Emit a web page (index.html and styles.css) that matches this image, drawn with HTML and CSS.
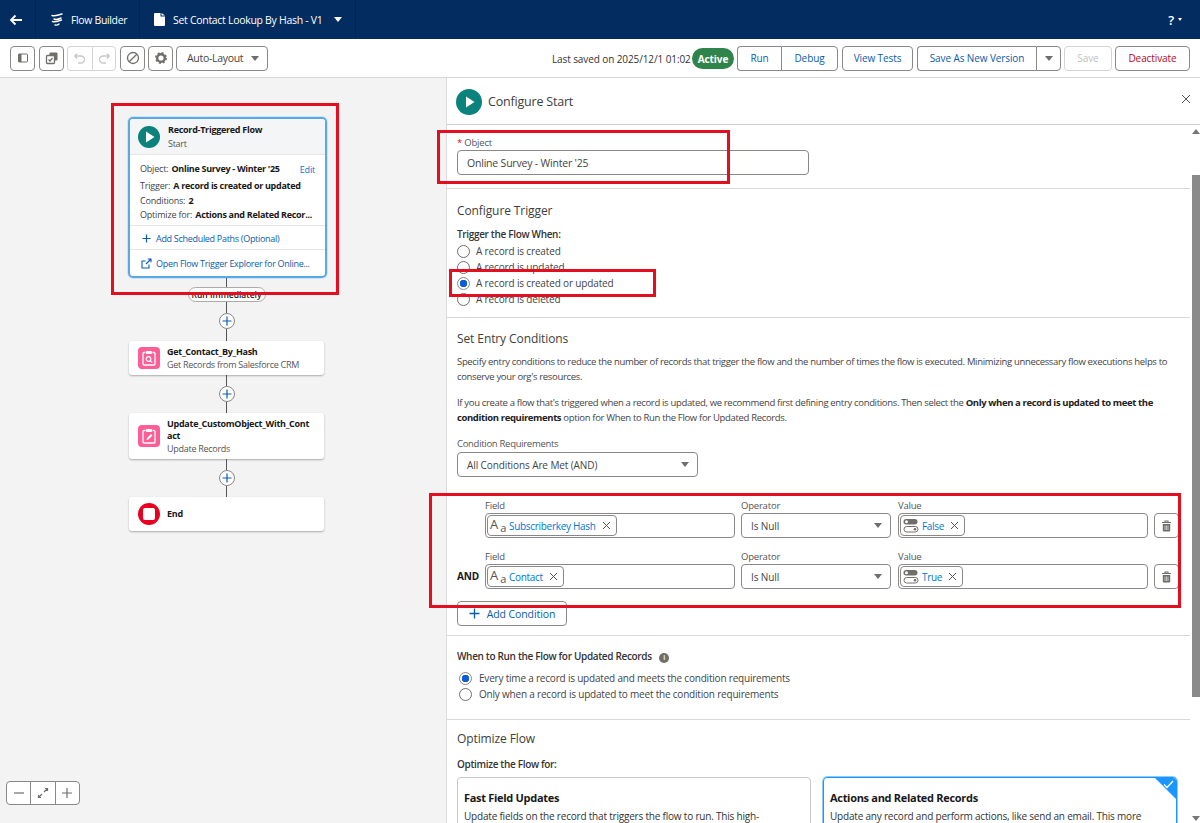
FILE: index.html
```html
<!DOCTYPE html>
<html lang="en">
<head>
<meta charset="utf-8">
<title>Flow Builder</title>
<link rel="stylesheet" href="styles.css">
</head>
<body>
<header class="topbar">
  <div class="tab tab-back">
    <svg class="ic" width="16" height="16" viewBox="0 0 16 16"><path d="M14 8H3M7.500 3.500 3 8l4.500 4.500" fill="none" stroke="#fff" stroke-width="1.800"/></svg>
  </div>
  <div class="tab tab-app">
    <svg width="14" height="16" viewBox="0 0 14 16"><path d="M2 3.500c3 1 6-.5 10-1.500M4 7c2 1 4 .5 7-1M2.500 9.500c3 1 6-.5 9-1.500M5 13c2 .5 3 0 4-1" fill="none" stroke="#fff" stroke-width="1.400" stroke-linecap="round"/></svg>
    <span>Flow Builder</span>
  </div>
  <div class="tab tab-title">
    <svg width="11" height="13" viewBox="0 0 11 13"><path d="M0 1a1 1 0 0 1 1-1h5.500v3.500H11V12a1 1 0 0 1-1 1H1a1 1 0 0 1-1-1zM7.500 0 11 2.600H7.500z" fill="#fff"/></svg>
    <span>Set Contact Lookup By Hash - V1</span>
    <i class="caret caret-white"></i>
  </div>
  <div class="help"><b>?</b><i class="caret-mini"></i></div>
</header>

<div class="toolbar">
  <button class="btn icon-btn btn-first"><svg width="12" height="12" viewBox="0 0 12 12"><rect x="1.500" y="2" width="9" height="8" rx="1" fill="none" stroke="#706e6b"/><rect x="1.500" y="2" width="3" height="8" fill="#706e6b"/></svg></button>
  <button class="btn icon-btn"><svg width="14" height="14" viewBox="0 0 14 14"><rect x="4.500" y="1.500" width="8" height="8" rx="1" fill="#706e6b"/><rect x="1.500" y="4.500" width="8" height="8" rx="1" fill="#fff" stroke="#706e6b" stroke-width="1.300"/><path d="m3.500 8.500 1.500 1.500 2.500-3" fill="none" stroke="#706e6b" stroke-width="1.200"/></svg></button>
  <div class="btn-group group-undo">
    <button class="btn icon-btn off"><svg width="14" height="14" viewBox="0 0 14 14"><path d="M4 7.500 1.800 5 4 2.800M2 5h6a3.500 3.500 0 0 1 0 7H5" fill="none" stroke="#c9c7c5" stroke-width="1.300"/></svg></button>
    <button class="btn icon-btn off"><svg width="14" height="14" viewBox="0 0 14 14"><path d="M10 7.500 12.200 5 10 2.800M12 5H6a3.500 3.500 0 0 0 0 7h3" fill="none" stroke="#c9c7c5" stroke-width="1.300"/></svg></button>
  </div>
  <button class="btn icon-btn"><svg width="14" height="14" viewBox="0 0 14 14"><circle cx="7" cy="7" r="5.500" fill="none" stroke="#706e6b" stroke-width="1.300"/><path d="M3.200 10.800 10.800 3.200" stroke="#706e6b" stroke-width="1.300"/></svg></button>
  <button class="btn icon-btn"><svg width="14" height="14" viewBox="0 0 14 14"><circle cx="7" cy="7" r="3.800" fill="none" stroke="#706e6b" stroke-width="2.400"/><circle cx="7" cy="7" r="5.200" fill="none" stroke="#706e6b" stroke-width="1.500" stroke-dasharray="2 2.080"/></svg></button>
  <div class="btn select-btn"><span>Auto-Layout</span><i class="caret caret-gray"></i></div>

  <div class="toolbar-right">
    <span class="saved">Last saved on 2025/12/1 01:02</span>
    <span class="badge">Active</span>
    <div class="btn-group group-run">
      <button class="btn link w-run">Run</button>
      <button class="btn link w-debug">Debug</button>
    </div>
    <button class="btn link w-tests">View Tests</button>
    <div class="btn-group group-save">
      <button class="btn link w-savenew">Save As New Version</button>
      <button class="btn w-more"><i class="caret caret-gray"></i></button>
    </div>
    <button class="btn off-text w-save">Save</button>
    <button class="btn danger w-deact">Deactivate</button>
  </div>
</div>

<main class="workspace">
  <section class="canvas">
    <div class="flow">
      <div class="start-card">
        <div class="start-head">
          <span class="play"><svg width="10" height="12" viewBox="0 0 10 12"><path d="M1 .5 9.500 6 1 11.500z" fill="#fff"/></svg></span>
          <div>
            <div class="node-title">Record-Triggered Flow</div>
            <div class="node-sub node-sub-start">Start</div>
          </div>
        </div>
        <div class="start-info">
          <div class="info-row info-first"><span>Object:</span> <b>Online Survey - Winter '25</b><a class="edit">Edit</a></div>
          <div class="info-row info-trigger"><span>Trigger:</span> <b>A record is created or updated</b></div>
          <div class="info-row info-cond"><span>Conditions:</span> <b>2</b></div>
          <div class="info-row info-opt"><span>Optimize for:</span> <b>Actions and Related Recor...</b></div>
        </div>
        <div class="start-link">
          <svg width="11" height="11" viewBox="0 0 11 11"><path d="M5.500 1.500v8M1.500 5.500h8" stroke="#0b5cab" stroke-width="1.200"/></svg>
          <span>Add Scheduled Paths (Optional)</span>
        </div>
        <div class="start-link start-link-last">
          <svg width="11" height="11" viewBox="0 0 11 11"><path d="M8 6.500V10H1V3h3.500M5 6l5-5M6.800 1H10v3.200" fill="none" stroke="#0b5cab" stroke-width="1.100"/></svg>
          <span>Open Flow Trigger Explorer for Online...</span>
        </div>
      </div>
      <div class="line h9"></div>
      <div class="pill">Run Immediately</div>
      <div class="line h11"></div>
      <div class="plus"><svg width="10" height="10" viewBox="0 0 10 10"><path d="M5 .5v9M.5 5h9" stroke="#0b5cab" stroke-width="1.200"/></svg></div>
      <div class="line h12"></div>

      <div class="node node-get">
        <span class="pink"><svg width="14" height="16" viewBox="0 0 14 16"><path d="M3.500 2.500H2a1 1 0 0 0-1 1V14a1 1 0 0 0 1 1h10a1 1 0 0 0 1-1V3.500a1 1 0 0 0-1-1h-1.500" fill="none" stroke="#fff" stroke-width="1.300"/><rect x="4" y="1" width="6" height="3" rx=".8" fill="#fff"/><circle cx="6.500" cy="9" r="2.300" fill="none" stroke="#fff" stroke-width="1.200"/><path d="m8.200 10.700 2 2" stroke="#fff" stroke-width="1.200"/></svg></span>
        <div>
          <div class="node-title">Get_Contact_By_Hash</div>
          <div class="node-sub">Get Records from Salesforce CRM</div>
        </div>
      </div>
      <div class="line h11"></div>
      <div class="plus"><svg width="10" height="10" viewBox="0 0 10 10"><path d="M5 .5v9M.5 5h9" stroke="#0b5cab" stroke-width="1.200"/></svg></div>
      <div class="line h11"></div>

      <div class="node node-update">
        <span class="pink"><svg width="14" height="16" viewBox="0 0 14 16"><path d="M3.500 2.500H2a1 1 0 0 0-1 1V14a1 1 0 0 0 1 1h10a1 1 0 0 0 1-1V3.500a1 1 0 0 0-1-1h-1.500" fill="none" stroke="#fff" stroke-width="1.300"/><rect x="4" y="1" width="6" height="3" rx=".8" fill="#fff"/><path d="m4.500 12 .5-2 4-4 1.500 1.500-4 4z" fill="#fff"/></svg></span>
        <div>
          <div class="node-title">Update_CustomObject_With_Cont<br>act</div>
          <div class="node-sub">Update Records</div>
        </div>
      </div>
      <div class="line h11"></div>
      <div class="plus"><svg width="10" height="10" viewBox="0 0 10 10"><path d="M5 .5v9M.5 5h9" stroke="#0b5cab" stroke-width="1.200"/></svg></div>
      <div class="line h11"></div>

      <div class="node node-end">
        <span class="end-ic"><i></i></span>
        <div class="node-title">End</div>
      </div>
    </div>

    <div class="zoom-bar">
      <button class="zoom-btn"><svg width="12" height="12" viewBox="0 0 12 12"><path d="M1 6h10" stroke="#706e6b" stroke-width="1.200"/></svg></button>
      <button class="zoom-btn"><svg width="12" height="12" viewBox="0 0 12 12"><path d="M7 5l3.500-3.500M8 1.500h2.500V4M5 7l-3.500 3.500M4 10.500H1.500V8" fill="none" stroke="#706e6b" stroke-width="1.200"/></svg></button>
      <button class="zoom-btn"><svg width="12" height="12" viewBox="0 0 12 12"><path d="M6 1v10M1 6h10" stroke="#706e6b" stroke-width="1.200"/></svg></button>
    </div>
    <div class="redbox red-start"></div>
  </section>

  <section class="panel">
    <div class="panel-head">
      <span class="play play-lg"><svg width="10" height="12" viewBox="0 0 10 12"><path d="M1 .5 9.500 6 1 11.500z" fill="#fff"/></svg></span>
      <h2 class="panel-title">Configure Start</h2>
      <svg class="close" width="10" height="10" viewBox="0 0 10 10"><path d="m1 1 8 8M9 1 1 9" stroke="#555" stroke-width="1"/></svg>
    </div>
    <div class="panel-main">
      <div class="scroll">
        <div class="sec sec-object">
          <div class="label"><em>*</em> Object</div>
          <div class="input w-object">Online Survey - Winter '25</div>
        </div>
        <div class="sec sec-trigger">
          <h3 class="heading">Configure Trigger</h3>
          <div class="label-b label-trigger">Trigger the Flow When:</div>
          <div class="radios">
            <div class="radio"><i></i>A record is created</div>
            <div class="radio"><i></i>A record is updated</div>
            <div class="radio on"><i></i>A record is created or updated</div>
            <div class="radio"><i></i>A record is deleted</div>
          </div>
        </div>
        <div class="sec sec-entry">
          <h3 class="heading">Set Entry Conditions</h3>
          <p class="para para-1">Specify entry conditions to reduce the number of records that trigger the flow and the number of times the flow is executed. Minimizing unnecessary flow executions helps to conserve your org's resources.</p>
          <p class="para para-2">If you create a flow that's triggered when a record is updated, we recommend first defining entry conditions. Then select the <b>Only when a record is updated to meet the condition requirements</b> option for When to Run the Flow for Updated Records.</p>
          <div class="label label-req">Condition Requirements</div>
          <div class="input select w-req">All Conditions Are Met (AND)<i class="caret caret-gray"></i></div>

          <div class="cond cond-1">
            <div class="cond-and"></div>
            <div><div class="label">Field</div><div class="input has-chip"><span class="chip"><span class="aa"><span class="aa-big">A</span><span class="aa-small">a</span></span><a>Subscriberkey Hash</a><svg class="x" width="9" height="9" viewBox="0 0 9 9"><path d="m1 1 7 7M8 1 1 8" stroke="#555"/></svg></span></div></div>
            <div class="col-op"><div class="label">Operator</div><div class="input select">Is Null<i class="caret caret-gray"></i></div></div>
            <div class="col-val"><div class="label">Value</div><div class="input has-chip"><span class="chip"><svg width="16" height="15" viewBox="0 0 16 15"><rect x=".5" y="1" width="14" height="5.500" rx="2.700" fill="#706e6b"/><circle cx="3.500" cy="3.700" r="1.500" fill="#fff"/><rect x="1" y="8.500" width="14" height="5.500" rx="2.700" fill="#fff" stroke="#706e6b"/><circle cx="12" cy="11.200" r="1.300" fill="#706e6b"/></svg><a>False</a><svg class="x" width="9" height="9" viewBox="0 0 9 9"><path d="m1 1 7 7M8 1 1 8" stroke="#555"/></svg></span></div></div>
            <button class="btn del"><svg width="11" height="12" viewBox="0 0 11 12"><path d="M1 2.500h9M4 2.500V1h3v1.500" fill="none" stroke="#706e6b" stroke-width="1.100"/><path d="M1.800 4h7.400v6.500a1 1 0 0 1-1 1H2.800a1 1 0 0 1-1-1z" fill="#706e6b"/><path d="M4 5.500v4.500M5.500 5.500v4.500M7 5.500v4.500" stroke="#fff" stroke-width=".6"/></svg></button>
          </div>
          <div class="cond cond-2">
            <div class="cond-and">AND</div>
            <div><div class="label">Field</div><div class="input has-chip"><span class="chip"><span class="aa"><span class="aa-big">A</span><span class="aa-small">a</span></span><a>Contact</a><svg class="x" width="9" height="9" viewBox="0 0 9 9"><path d="m1 1 7 7M8 1 1 8" stroke="#555"/></svg></span></div></div>
            <div class="col-op"><div class="label">Operator</div><div class="input select">Is Null<i class="caret caret-gray"></i></div></div>
            <div class="col-val"><div class="label">Value</div><div class="input has-chip"><span class="chip"><svg width="16" height="15" viewBox="0 0 16 15"><rect x=".5" y="1" width="14" height="5.500" rx="2.700" fill="#706e6b"/><circle cx="3.500" cy="3.700" r="1.500" fill="#fff"/><rect x="1" y="8.500" width="14" height="5.500" rx="2.700" fill="#fff" stroke="#706e6b"/><circle cx="12" cy="11.200" r="1.300" fill="#706e6b"/></svg><a>True</a><svg class="x" width="9" height="9" viewBox="0 0 9 9"><path d="m1 1 7 7M8 1 1 8" stroke="#555"/></svg></span></div></div>
            <button class="btn del"><svg width="11" height="12" viewBox="0 0 11 12"><path d="M1 2.500h9M4 2.500V1h3v1.500" fill="none" stroke="#706e6b" stroke-width="1.100"/><path d="M1.800 4h7.400v6.500a1 1 0 0 1-1 1H2.800a1 1 0 0 1-1-1z" fill="#706e6b"/><path d="M4 5.500v4.500M5.500 5.500v4.500M7 5.500v4.500" stroke="#fff" stroke-width=".6"/></svg></button>
          </div>
          <button class="btn add"><svg width="11" height="11" viewBox="0 0 11 11"><path d="M5.500 .5v10M.5 5.500h10" stroke="#0b5cab" stroke-width="1.300"/></svg><span>Add Condition</span></button>
        </div>
        <div class="sec sec-when">
          <div class="label-b label-when">When to Run the Flow for Updated Records <span class="info">i</span></div>
          <div class="radios radios-when">
            <div class="radio on"><i></i>Every time a record is updated and meets the condition requirements</div>
            <div class="radio"><i></i>Only when a record is updated to meet the condition requirements</div>
          </div>
        </div>
        <div class="sec sec-opt">
          <h3 class="heading">Optimize Flow</h3>
          <div class="label-b label-opt">Optimize the Flow for:</div>
          <div class="cards">
            <div class="card"><h4>Fast Field Updates</h4><p>Update fields on the record that triggers the flow to run. This high-performance flow runs before the record is saved to the database.</p></div>
            <div class="card card-on"><span class="corner"></span><svg class="check" width="11" height="9" viewBox="0 0 11 9"><path d="m1 4.500 3 3L10 1" fill="none" stroke="#fff" stroke-width="1.300"/></svg><h4>Actions and Related Records</h4><p>Update any record and perform actions, like send an email. This more flexible flow runs after the record is saved to the database.</p></div>
          </div>
        </div>
      </div>
      <div class="scrollbar">
        <i class="arrow arrow-up"></i>
        <div class="thumb"></div>
        <i class="arrow arrow-down"></i>
      </div>
      <div class="redbox red-object"></div>
      <div class="redbox red-radio"></div>
      <div class="redbox red-cond"></div>
    </div>
  </section>
</main>
</body>
</html>
```
FILE: styles.css
```css
* { box-sizing: border-box; }
html, body { margin: 0; height: 100%; overflow: hidden; }
body {
  font-family: "Open Sans", "Liberation Sans", sans-serif;
  font-size: 10px;
  letter-spacing: -0.1px;
  color: #444;
  background: #fff;
  display: flex;
  flex-direction: column;
  height: 823px;
}
button { font: inherit; letter-spacing: inherit; padding: 0; }
h2, h3, h4, p { margin: 0; font-weight: normal; }
a { color: #0176d3; }

/* top bar */
.topbar { height: 39px; background: #032d60; color: #fff; display: flex; align-items: center; flex: none; }
.tab { height: 39px; display: flex; align-items: center; border-right: 1px solid #02264f; }
.tab-back { width: 36px; padding-left: 8px; }
.tab-app { width: 104px; padding-left: 14px; gap: 7px; }
.tab-title { width: 216px; padding-left: 14px; gap: 8px; font-size: 10.500px; letter-spacing: -0.3px; }
.tab-app span { font-size: 10.500px; letter-spacing: -0.35px; }
.help { margin-left: auto; margin-right: 18px; display: flex; align-items: center; gap: 4px; font-size: 13px; }
.help b { font-weight: 600; }
.caret { display: inline-block; border-style: solid; border-width: 5px 4.500px 0; border-color: transparent; }
.caret-white { border-top-color: #fff; margin-left: 4px; }
.caret-gray { border-top-color: #706e6b; }
.caret-mini { border-style: solid; border-width: 3px 2.500px 0; border-color: #fff transparent transparent; }

/* toolbar */
.toolbar { height: 39px; flex: none; border-bottom: 1px solid #d8d8d8; padding: 7px 10px 6px; display: flex; align-items: stretch; background: #fff; }
.toolbar > * { flex: none; }
.btn { background: #fff; border: 1px solid #8a8886; border-radius: 4px; display: flex; align-items: center; justify-content: center; color: #444; }
.toolbar .btn { padding-bottom: 1px; }
.icon-btn { width: 25px; height: 25px; margin-right: 3px; }
.btn-first { margin-right: 4px; }
.btn-group { display: flex; }
.group-undo { margin-right: 4px; }
.group-undo .icon-btn { margin: 0; border-color: #d4d4d4; width: 24.500px; }
.group-undo .icon-btn:first-child { border-radius: 4px 0 0 4px; border-right: 0; }
.group-undo .icon-btn:last-child { border-radius: 0 4px 4px 0; }
.select-btn { width: 92px; justify-content: space-between; padding: 0 8px 1px 10px; font-size: 10.500px; letter-spacing: -0.3px; }
.toolbar-right { margin-left: auto; display: flex; align-items: stretch; }
.saved { align-self: center; color: #333; width: 140px; white-space: nowrap; }
.badge { align-self: center; width: 42px; height: 21px; border-radius: 11px; background: #2e844a; color: #fff; font-weight: 700; display: flex; align-items: center; justify-content: center; margin-right: 3px; }
.link { color: #0b5cab; }
.group-run { margin-right: 4px; }
.group-run .btn:first-child, .group-save .btn:first-child { border-radius: 4px 0 0 4px; border-right: 0; }
.group-run .btn:last-child, .group-save .btn:last-child { border-radius: 0 4px 4px 0; }
.w-run { width: 44px; }
.w-debug { width: 57px; }
.w-tests { width: 71px; margin-right: 4px; }
.w-savenew { width: 119px; }
.w-more { width: 25px; }
.group-save { margin-right: 3px; }
.w-save { width: 48px; margin-right: 3px; border-color: #d4d4d4; }
.off-text { color: #c0c0c0; }
.danger { color: #ba0517; width: 75px; }
.w-deact { width: 75px; }

/* workspace */
.workspace { flex: 1; display: flex; min-height: 0; }
.canvas { width: 446px; flex: none; background: #f3f3f3; position: relative; overflow: hidden; }
.flow { display: flex; flex-direction: column; align-items: center; padding-top: 39px; width: 453px; }
.start-card { width: 199px; height: 161px; margin-left: 2px; background: #fff; border: 2px solid #5aa9e6; border-radius: 5px; box-shadow: 0 0 0 1px #cfe5f7; flex: none; }
.start-head { height: 36px; background: #f3f5f7; display: flex; align-items: center; padding-left: 8px; gap: 8px; border-bottom: 1px solid #e5e5e5; border-radius: 3px 3px 0 0; }
.play { width: 22px; height: 22px; border-radius: 50%; background: #0b827c; display: flex; align-items: center; justify-content: center; flex: none; padding-left: 2px; }
.play-lg { width: 26px; height: 26px; }
.node-title { font-size: 9px; font-weight: 700; color: #181818; line-height: 12px; letter-spacing: -0.28px; }
.node-sub { font-size: 9px; color: #555; line-height: 13px; letter-spacing: -0.28px; }
.node-sub-start { margin-top: 1px; }
.start-info { height: 71px; padding: 7px 10px 0; border-bottom: 1px solid #e5e5e5; font-size: 9px; letter-spacing: -0.2px; position: relative; }
.info-row { line-height: 14.500px; white-space: nowrap; }
.info-first { margin-bottom: 2.500px; }
.info-row b { color: #181818; font-weight: 700; margin-left: 1px; letter-spacing: -0.3px; }
.edit { position: absolute; right: 10px; top: 8px; }
.start-link { height: 24px; display: flex; align-items: center; padding: 2px 0 0 11px; gap: 4px; color: #0b5cab; font-size: 9px; letter-spacing: -0.3px; border-bottom: 1px solid #e5e5e5; white-space: nowrap; }
.start-link-last { border-bottom: 0; }
.line { width: 1px; background: #555; flex: none; }
.h9 { height: 9px; }
.h11 { height: 11px; }
.h12 { height: 12px; }
.pill { width: 78px; height: 15px; border: 1px solid #aaa; border-radius: 8px; background: #fff; text-align: center; font-size: 8.500px; font-weight: 600; line-height: 13px; color: #222; letter-spacing: 0; flex: none; }
.plus { width: 16px; height: 16px; border-radius: 50%; background: #fff; border: 1px solid #8a8886; display: flex; align-items: center; justify-content: center; flex: none; }
.node { width: 195px; background: #fff; border-radius: 3px; box-shadow: 0 1px 2px rgba(0,0,0,.3); display: flex; align-items: center; gap: 7px; padding-left: 9px; flex: none; }
.node-get { height: 34px; }
.node-update { height: 46px; }
.node-end { height: 34px; }
.pink { width: 22px; height: 22px; border-radius: 4px; background: #ff5d96; display: flex; align-items: center; justify-content: center; flex: none; }
.end-ic { width: 22px; height: 22px; border-radius: 50%; background: #ea001e; display: flex; align-items: center; justify-content: center; flex: none; }
.end-ic i { width: 12px; height: 12px; background: #fff; border-radius: 2px; }
.zoom-bar { position: absolute; left: 6px; bottom: 18px; display: flex; width: 74px; height: 24px; background: #fff; border: 1px solid #8a8886; border-radius: 4px; }
.zoom-btn { flex: 1; border: 0; border-right: 1px solid #8a8886; background: none; display: flex; align-items: center; justify-content: center; }
.zoom-btn:last-child { border-right: 0; }
.redbox { position: absolute; border: 3px solid #e30f20; pointer-events: none; }
.red-start { left: 111px; top: 25px; width: 228px; height: 192px; }

/* panel */
.panel { flex: 1; min-width: 0; display: flex; flex-direction: column; border-left: 1px solid #dcdcdc; background: #fff; }
.panel-head { height: 47px; flex: none; display: flex; align-items: center; padding: 1px 0 0 9px; gap: 6px; border-bottom: 1px solid #cfcfcf; position: relative; }
.panel-title { font-size: 12.500px; color: #3e3e3c; letter-spacing: -0.2px; }
.close { position: absolute; right: 9px; top: 16px; }
.panel-main { flex: 1; min-height: 0; display: flex; position: relative; }
.scroll { flex: 1; min-width: 0; overflow: hidden; }
.sec { padding-left: 10px; padding-right: 10px; border-bottom: 1px solid #d8d8d8; }
.sec-object { padding-top: 11px; height: 64px; }
.label { line-height: 14px; font-size: 9.500px; color: #555; letter-spacing: -0.2px; }
.sec-object .label { line-height: 13px; }
.label em { color: #ea001e; font-style: normal; }
.input { height: 25px; border: 1px solid #8a8886; border-radius: 4px; background: #fff; display: flex; align-items: center; padding-left: 9px; color: #444; }
.w-object { width: 352px; margin-top: 1px; font-size: 10.500px; letter-spacing: -0.2px; }
.sec-trigger { padding-top: 12px; padding-bottom: 10px; }
.heading { font-size: 12px; line-height: 20px; color: #3e3e3c; }
.label-b { font-weight: 600; line-height: 14px; color: #333; letter-spacing: -0.33px; }
.label-trigger { margin-top: 6px; }
.radios { margin-top: 2px; }
.radio { height: 16px; display: flex; align-items: center; color: #444; font-size: 10px; white-space: nowrap; letter-spacing: -0.15px; }
.radio i { width: 13px; height: 13px; border: 1px solid #706e6b; border-radius: 50%; background: #fff; margin-right: 6px; flex: none; }
.radio.on i { border-color: #8a8886; background: radial-gradient(circle, #0b5cd5 3.500px, #fff 4px); }
.sec-entry { padding-top: 11px; padding-bottom: 9px; }
.para { line-height: 15px; font-size: 9.500px; color: #444; margin-top: 11px; letter-spacing: -0.33px; }
.para-1 { margin-top: 5px; }
.para-2 { margin-top: 11px; }
.para b { color: #222; font-weight: 700; letter-spacing: -0.38px; }
.label-req { margin-top: 12px; letter-spacing: -0.3px; }
.w-req { width: 241px; margin-top: 1px; }
.select { justify-content: space-between; padding-right: 8px; }
.cond { display: grid; grid-template-columns: 28px 250px 156px 257px 31px; align-items: end; }
.col-op { margin-left: 6px; }
.col-val { margin-left: 7px; }
.del { margin-left: 6px; }
.cond-1 { margin-top: 22px; }
.cond-2 { margin-top: 12px; }
.cond-and { font-weight: 700; color: #181818; line-height: 25px; }
.has-chip { padding-left: 1px; }
.chip { height: 21px; border: 1px solid #8a8886; border-radius: 4px; display: flex; align-items: center; padding: 0 5px 0 2px; gap: 3px; letter-spacing: -0.3px; }
.chip a { color: #0176d3; }
.x { margin-left: 3px; }
.aa { width: 16px; height: 15px; display: flex; justify-content: space-between; color: #555; }
.aa-big { font-size: 13px; line-height: 12px; align-self: flex-start; }
.aa-small { font-size: 11px; line-height: 11px; align-self: flex-end; }
.del { height: 25px; width: 25px; }
.add { width: 110px; height: 25px; margin-top: 12px; color: #0b5cab; gap: 7px; font-size: 10.500px; }
.sec-when { padding-top: 13px; padding-bottom: 17px; }
.info { display: inline-flex; width: 10px; height: 10px; background: #706e6b; color: #fff; border-radius: 50%; align-items: center; justify-content: center; font-size: 7px; margin-left: 5px; }
.radios-when { margin-top: 7px; padding-left: 2px; }
.radios-when .radio { letter-spacing: -0.2px; }
.radios-when .radio i { margin-right: 7px; }
.sec-opt { padding-top: 9px; border-bottom: 0; }
.label-opt { margin-top: 8px; }
.cards { display: flex; gap: 12px; margin-top: 6px; width: 720px; }
.card { flex: 1; height: 200px; border: 1px solid #c9c9c9; border-radius: 4px; padding: 12px 6px; position: relative; }
.card-on { border: 1px solid #1b96ff; box-shadow: 0 0 0 .5px #1b96ff; overflow: hidden; }
.card h4 { font-size: 11px; font-weight: 700; color: #181818; line-height: 16px; letter-spacing: -0.3px; }
.card p { font-size: 10px; line-height: 16px; color: #333; margin-top: 2px; letter-spacing: -0.2px; }
.corner { position: absolute; right: 0; top: 0; border-style: solid; border-width: 0 21px 21px 0; border-color: transparent #1b96ff transparent transparent; }
.check { position: absolute; right: 2px; top: 2px; }
.scrollbar { width: 10px; flex: none; display: flex; flex-direction: column; align-items: center; background: #fff; position: relative; padding-left: 2px; }
.thumb { position: absolute; left: 2px; top: 50px; width: 8px; height: 522px; background: #8a8a8a; }
.arrow { position: absolute; left: 2px; border-style: solid; border-color: transparent; }
.arrow-up { top: 4px; border-width: 0 4px 5px; border-bottom-color: #777; }
.arrow-down { bottom: 2px; border-width: 5px 4px 0; border-top-color: #777; }
.red-object { left: -10px; top: 5px; width: 293px; height: 54px; }
.red-radio { left: 2px; top: 144px; width: 207px; height: 28px; }
.red-cond { left: -18px; top: 368px; width: 752px; height: 115px; }
```
